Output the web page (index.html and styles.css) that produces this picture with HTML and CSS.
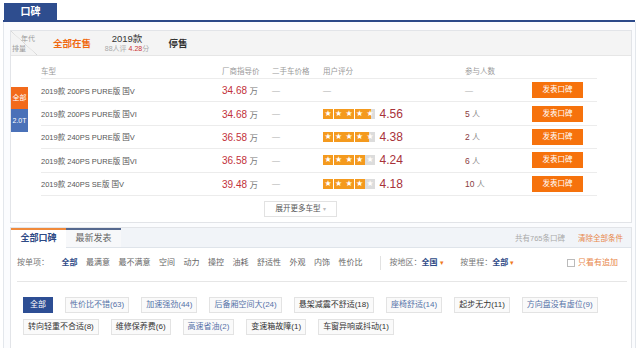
FILE: index.html
```html
<!DOCTYPE html>
<html lang="zh-CN">
<head>
    <meta charset="UTF-8">
    <title>口碑</title>
    <link rel="stylesheet" href="styles.css">
</head>
<body>
<div class="wrap">
    <div class="topbar"><span class="top-tab">口碑</span></div>
    <div class="panel">
        <div class="box spec-box">
            <div class="year-row">
                <div class="corner"><span class="c-top">年代</span><span class="c-bot">排量</span></div>
                <a class="year year-all">全部在售</a>
                <div class="year year-mid">
                    <span class="y-name">2019款</span>
                    <span class="y-sub">88人评 <em>4.28</em>分</span>
                </div>
                <a class="year year-stop">停售</a>
            </div>
            <div class="spec-body">
                <div class="side">
                    <span class="side-item on">全部</span>
                    <span class="side-item">2.0T</span>
                </div>
                <div class="table">
                    <div class="row head">
                        <span>车型</span><span>厂商指导价</span><span>二手车价格</span><span>用户评分</span><span>参与人数</span><span></span>
                    </div>
                    <div class="row">
                        <span class="model">2019款 200PS PURE版 国V</span>
                        <span class="price"><b>34.68</b> 万</span>
                        <span class="dash">—</span>
                        <span class="dash">—</span>
                        <span class="dash">—</span>
                        <span><a class="btn">发表口碑</a></span>
                    </div>
                    <div class="row">
                        <span class="model">2019款 200PS PURE版 国VI</span>
                        <span class="price"><b>34.68</b> 万</span>
                        <span class="dash">—</span>
                        <span class="rate"><span class="stars"><i class="star" style="--f:100%">★</i><i class="star" style="--f:100%">★</i><i class="star" style="--f:100%">★</i><i class="star" style="--f:100%">★</i><i class="star" style="--f:56%">★</i></span><b>4.56</b></span>
                        <span class="num"><b>5</b> 人</span>
                        <span><a class="btn">发表口碑</a></span>
                    </div>
                    <div class="row">
                        <span class="model">2019款 240PS PURE版 国V</span>
                        <span class="price"><b>36.58</b> 万</span>
                        <span class="dash">—</span>
                        <span class="rate"><span class="stars"><i class="star" style="--f:100%">★</i><i class="star" style="--f:100%">★</i><i class="star" style="--f:100%">★</i><i class="star" style="--f:100%">★</i><i class="star" style="--f:38%">★</i></span><b>4.38</b></span>
                        <span class="num"><b>2</b> 人</span>
                        <span><a class="btn">发表口碑</a></span>
                    </div>
                    <div class="row">
                        <span class="model">2019款 240PS PURE版 国VI</span>
                        <span class="price"><b>36.58</b> 万</span>
                        <span class="dash">—</span>
                        <span class="rate"><span class="stars"><i class="star" style="--f:100%">★</i><i class="star" style="--f:100%">★</i><i class="star" style="--f:100%">★</i><i class="star" style="--f:100%">★</i><i class="star" style="--f:0%">★</i></span><b>4.24</b></span>
                        <span class="num"><b>6</b> 人</span>
                        <span><a class="btn">发表口碑</a></span>
                    </div>
                    <div class="row">
                        <span class="model">2019款 240PS SE版 国V</span>
                        <span class="price"><b>39.48</b> 万</span>
                        <span class="dash">—</span>
                        <span class="rate"><span class="stars"><i class="star" style="--f:100%">★</i><i class="star" style="--f:100%">★</i><i class="star" style="--f:100%">★</i><i class="star" style="--f:100%">★</i><i class="star" style="--f:0%">★</i></span><b>4.18</b></span>
                        <span class="num"><b>10</b> 人</span>
                        <span><a class="btn">发表口碑</a></span>
                    </div>
                    <div class="more-wrap"><a class="more">展开更多车型 <span class="arr">▾</span></a></div>
                </div>
            </div>
        </div>

        <div class="box review-box">
            <div class="tabs">
                <a class="tab on">全部口碑</a>
                <a class="tab">最新发表</a>
                <span class="count">共有765条口碑</span>
                <a class="clear">清除全部条件</a>
            </div>
            <div class="filters">
                <span class="f-label">按单项：</span>
                <a class="f-item on">全部</a>
                <a class="f-item">最满意</a>
                <a class="f-item">最不满意</a>
                <a class="f-item">空间</a>
                <a class="f-item">动力</a>
                <a class="f-item">操控</a>
                <a class="f-item">油耗</a>
                <a class="f-item">舒适性</a>
                <a class="f-item">外观</a>
                <a class="f-item">内饰</a>
                <a class="f-item">性价比</a>
                <span class="f-sep"></span>
                <span class="f-drop">按地区：<b>全国</b> <span class="caret">▾</span></span>
                <span class="f-drop">按里程：<b>全部</b> <span class="caret">▾</span></span>
                <label class="f-check"><span class="box-ck"></span>只看有追加</label>
            </div>
            <div class="tags">
                <a class="tag on">全部</a>
                <a class="tag good">性价比不错(63)</a>
                <a class="tag good">加速强劲(44)</a>
                <a class="tag good">后备厢空间大(24)</a>
                <a class="tag">悬架减震不舒适(18)</a>
                <a class="tag good">座椅舒适(14)</a>
                <a class="tag">起步无力(11)</a>
                <a class="tag good">方向盘没有虚位(9)</a>
                <a class="tag">转向轻重不合适(8)</a>
                <a class="tag">维修保养费(6)</a>
                <a class="tag good">高速省油(2)</a>
                <a class="tag">变速箱故障(1)</a>
                <a class="tag">车窗异响或抖动(1)</a>
            </div>
        </div>
    </div>
</div>
</body>
</html>
```

FILE: styles.css
```css
body {
    margin: 0;
    font-family: "Liberation Sans", "Noto Sans CJK SC", sans-serif;
    font-size: 8px;
    color: #333;
    background: #fff;
    overflow: hidden;
}

a {
    text-decoration: none;
    cursor: pointer;
}

.wrap {
    width: 632px;
    margin-left: 3px;
}

/* top tab */
.topbar {
    height: 17px;
    padding-top: 3px;
    border-bottom: 2px solid #2c4a8a;
}

.top-tab {
    display: block;
    width: 53px;
    height: 17px;
    margin-left: 1px;
    background: #2e4d8e;
    color: #fff;
    font-weight: bold;
    font-size: 10px;
    line-height: 17px;
    text-align: center;
}

.panel {
    width: 622px;
    border-left: 1px solid #e3e7ec;
    border-right: 1px solid #e3e7ec;
    padding: 8px 3px 8px 6px;
    background: #fbfcfe;
}

.box {
    border: 1px solid #e2e4e8;
    background: #fff;
}

/* year row */
.year-row {
    display: flex;
    align-items: center;
    height: 24px;
    background: #f4f4f4;
    border-bottom: 1px solid #e6e6e6;
}

.corner {
    position: relative;
    width: 26px;
    height: 24px;
    background: linear-gradient(to top right, transparent calc(50% - 0.5px), #d6d6d6 50%, transparent calc(50% + 0.5px));
    color: #999;
    font-size: 7px;
}

.c-top {
    position: absolute;
    right: 2px;
    top: 2px;
}

.c-bot {
    position: absolute;
    left: 1px;
    bottom: 2px;
}

.year {
    text-align: center;
    font-size: 9.5px;
}

.year-all {
    width: 70px;
    color: #f06a12;
    font-weight: bold;
}

.year-mid {
    width: 40px;
    display: flex;
    flex-direction: column;
    align-items: center;
    color: #333;
}

.y-name {
    font-size: 9.5px;
    line-height: 11px;
}

.y-sub {
    font-size: 7px;
    color: #aaa;
    white-space: nowrap;
    line-height: 9px;
}

.y-sub em {
    font-style: normal;
    color: #c33;
}

.year-stop {
    width: 62px;
    color: #333;
    font-weight: bold;
}

/* spec table */
.spec-body {
    display: flex;
    padding-top: 7px;
}

.side {
    display: flex;
    flex-direction: column;
    flex-shrink: 0;
    width: 17px;
    margin-top: 24px;
    margin-right: 13px;
}

.side-item {
    height: 23px;
    line-height: 23px;
    text-align: center;
    color: #fff;
    background: #4a71b8;
    font-size: 7px;
    white-space: nowrap;
    overflow: hidden;
}

.side-item.on {
    height: 22px;
    line-height: 22px;
    background: #f26a1b;
}

.table {
    width: 556px;
}

.row {
    display: grid;
    grid-template-columns: 181px 50px 51px 142px 67px 65px;
    align-items: center;
    height: 22.4px;
    border-bottom: 1px solid #ececec;
}

.row.head {
    height: 15px;
    color: #999;
    font-size: 7.5px;
}

.model {
    color: #555;
    font-size: 7.5px;
    white-space: nowrap;
}

.price {
    color: #777;
    font-size: 8.5px;
}

.price b {
    font-weight: normal;
    font-size: 10px;
    color: #c2303a;
}

.dash {
    color: #aaa;
}

.rate {
    display: flex;
    align-items: center;
}

.stars {
    display: flex;
    margin-right: 4px;
}

.star {
    display: block;
    width: 10px;
    height: 10px;
    margin-right: 0.5px;
    background: linear-gradient(90deg, #f49a1e var(--f), #dcdcdc var(--f));
    color: #fff;
    font-style: normal;
    font-family: "DejaVu Sans", sans-serif;
    font-size: 8px;
    line-height: 10px;
    text-align: center;
}

.rate b {
    font-weight: normal;
    font-size: 12px;
    color: #a8323a;
}

.num {
    color: #888;
    font-size: 8px;
}

.num b {
    font-weight: normal;
    color: #8a3b40;
    font-size: 8.5px;
}

.btn {
    display: block;
    width: 51px;
    height: 16px;
    line-height: 16px;
    text-align: center;
    background: #f6720c;
    color: #fff;
    font-size: 7.5px;
}

.more-wrap {
    display: flex;
    justify-content: center;
    padding: 5px 0 5px;
    margin-left: -37px;
}

.more {
    display: block;
    height: 14px;
    line-height: 14px;
    padding: 0 10px;
    border: 1px solid #e2e2e2;
    color: #555;
    font-size: 7.5px;
}

.arr {
    color: #bbb;
    font-size: 6px;
}

/* review section */
.review-box {
    margin-top: 4px;
}

.tabs {
    display: flex;
    align-items: center;
    height: 19px;
    background: #f1f4f8;
    border-bottom: 1px solid #dfe4ea;
}

.tab {
    width: 55px;
    height: 17px;
    line-height: 17px;
    text-align: center;
    font-size: 9px;
    color: #666;
    border-top: 2px solid #55688e;
    background: #f7f8fa;
    align-self: flex-start;
}

.tab.on {
    color: #2d4a86;
    font-weight: bold;
    background: #fff;
    border-top-color: #f08a3c;
    height: 18px;
}

.count {
    margin-left: auto;
    color: #aaa;
    font-size: 7.5px;
}

.clear {
    margin: 0 8px 0 13px;
    color: #e8874a;
    font-size: 7.5px;
}

.filters {
    display: flex;
    align-items: center;
    gap: 8.5px;
    margin: 0 4px 0 6px;
    padding: 8px 0 11px;
    border-bottom: 1px solid #e6e6e6;
    line-height: 10px;
    font-size: 8px;
}

.f-label {
    color: #777;
    margin-right: 4px;
}

.f-item {
    color: #666;
}

.f-item.on {
    color: #2d4a86;
    font-weight: bold;
}

.f-sep {
    width: 1px;
    height: 14px;
    background: #e2e2e2;
    margin: 0 0 0 9px;
}

.f-drop {
    color: #777;
    margin-right: 8px;
}

.f-drop b {
    color: #2d4a86;
}

.caret {
    color: #f07a1e;
    font-size: 7px;
}

.f-check {
    display: flex;
    align-items: center;
    margin-left: auto;
    margin-right: 9px;
    color: #e8874a;
}

.box-ck {
    width: 6px;
    height: 6px;
    border: 1px solid #bbb;
    margin-right: 3px;
}

.tags {
    display: flex;
    flex-wrap: wrap;
    gap: 6px 12px;
    padding: 15px 10px 14px 12px;
}

.tag {
    display: block;
    height: 16px;
    box-sizing: border-box;
    line-height: 14px;
    padding: 0 4px;
    border: 1px solid #e3e3e3;
    background: #fafafa;
    color: #333;
    font-size: 8px;
    white-space: nowrap;
}

.tag.good {
    color: #5572a8;
}

.tag.on {
    background: #2d4e94;
    border-color: #2d4e94;
    color: #fff;
    padding: 0 6px;
}
```
